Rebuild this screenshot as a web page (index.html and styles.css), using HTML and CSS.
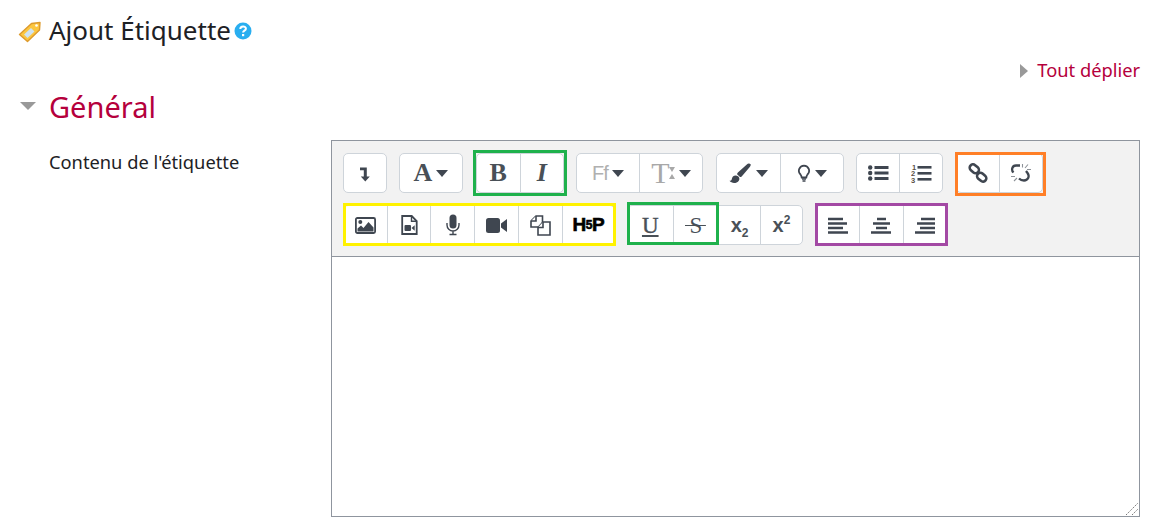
FILE: index.html
```html
<!DOCTYPE html>
<html>
<head>
    <title>Ajout Étiquette</title>
    <meta charset="utf-8">
    <link rel="stylesheet" href="styles.css">
</head>
<body>
    <svg class="defs" width="0" height="0">
        <symbol id="caret" viewBox="0 0 12 7"><path d="M0 0h12L6 7z"/></symbol>
    </svg>
    <div class="container">
        <div class="page-title">
            <svg class="label-icon" width="24" height="24" viewBox="0 0 24 24">
                <path d="M1.500 15.500 13.500 4.500 22 3.500 21.500 11 9.500 22.500z" fill="#fcc63f" stroke="#dd9a2c" stroke-width="1.400" stroke-linejoin="round"/>
                <path d="M6 15.500 13 9l3.500 3.500-7 6.500z" fill="#cfe3f2"/>
                <circle cx="18.500" cy="6.500" r="1.300" fill="#fff"/>
            </svg>
            <h2>Ajout Étiquette</h2>
            <svg class="help-icon" width="18" height="18" viewBox="0 0 18 18">
                <circle cx="9" cy="9" r="8.500" fill="#29aef0"/>
                <path d="M6.300 7c0-3.300 5.600-3.400 5.600-.3 0 2.100-2.800 1.900-2.800 3.900" fill="none" stroke="#fff" stroke-width="2"/>
                <rect x="8" y="12" width="2.200" height="2.200" fill="#fff"/>
            </svg>
        </div>
        <div class="collapse-row">
            <span class="tri-right"></span><a class="expand-link">Tout déplier</a>
        </div>
        <div class="section-head">
            <span class="tri-down"></span>
            <h3>Général</h3>
        </div>
        <div class="form-row">
            <label class="form-label">Contenu de l'étiquette</label>
            <div class="editor">
                <div class="toolbar">
                    <div class="tool-row first">
                        <div class="group w44">
                            <button class="btn"><svg width="14" height="17" viewBox="0 0 14 17"><path d="M2 2.500h6.800V11.500h3L7.300 16.500 2.800 11.500h3V5.300H2z" fill="#3f4650"/></svg></button>
                        </div>
                        <div class="group w64">
                            <button class="btn wide"><span class="serif big">A</span><svg class="car" width="12" height="7"><use href="#caret"/></svg></button>
                        </div>
                        <div class="group w88 hl-green">
                            <button class="btn"><span class="serif big">B</span></button>
                            <button class="btn"><span class="serif big ital">I</span></button>
                        </div>
                        <div class="group w127">
                            <button class="btn half"><span class="sans-ff">Ff</span><svg class="car" width="12" height="7"><use href="#caret"/></svg></button>
                            <button class="btn half"><span class="serif t-size">T</span><span class="updown"></span><svg class="car" width="12" height="7"><use href="#caret"/></svg></button>
                        </div>
                        <div class="group w128">
                            <button class="btn half">
                                <svg width="24" height="21" viewBox="0 0 22 20"><path d="M20.500 1c-1-.8-2-.4-3 .4L9 9c-.6.600-.8 1.200-.8 1.800l2.800 2.600c.8 0 1.300-.3 1.800-.9l7.500-8.700c.7-.9 1.200-2 .7-2.800zM7 12c-2.500 0-3.500 1.500-3.800 3.300C3 16.700 2 17 1 17c1.500 2 4.500 2.500 6.800 1.500 2-.8 3-2.600 2.500-4.300C10 13 8.500 12 7 12z" fill="#3f4650"/></svg>
                                <svg class="car" width="12" height="7"><use href="#caret"/></svg>
                            </button>
                            <button class="btn half">
                                <svg width="14" height="19" viewBox="0 0 14 18"><path d="M7 1.200a5.100 5.100 0 0 0-3.500 8.800c.8.900 1 1.800 1.200 3h4.600c.2-1.200.4-2.100 1.200-3A5.100 5.100 0 0 0 7 1.200z" fill="none" stroke="#3f4650" stroke-width="1.800"/><path d="M5 14.500h4M5.500 16.500h3" stroke="#3f4650" stroke-width="1.600"/></svg>
                                <svg class="car" width="12" height="7"><use href="#caret"/></svg>
                            </button>
                        </div>
                        <div class="group w87">
                            <button class="btn">
                                <svg width="21" height="16" viewBox="0 0 21 16"><g fill="#3f4650"><circle cx="2.200" cy="2.500" r="2.200"/><circle cx="2.200" cy="8" r="2.200"/><circle cx="2.200" cy="13.500" r="2.200"/><rect x="6.500" y="1" width="14" height="3"/><rect x="6.500" y="6.500" width="14" height="3"/><rect x="6.500" y="12" width="14" height="3"/></g></svg>
                            </button>
                            <button class="btn">
                                <svg width="21" height="21" viewBox="0 0 21 21"><g fill="#3f4650"><rect x="6.500" y="3" width="14" height="2.600"/><rect x="6.500" y="9" width="14" height="2.600"/><rect x="6.500" y="15" width="14" height="2.600"/></g><g font-family="Liberation Sans" font-size="7.500" font-weight="700" fill="#5a5046"><text x="1" y="6.500">1</text><text x="0" y="13">2</text><text x="0" y="19.500">3</text></g></svg>
                            </button>
                        </div>
                        <div class="group w87 hl-orange">
                            <button class="btn">
                                <svg width="20" height="20" viewBox="0 0 20 20"><g fill="none" stroke="#3f4650" stroke-width="2.600"><rect x="1.300" y="2.500" width="10" height="6.600" rx="3.300" transform="rotate(40 6.300 5.800)"/><rect x="8.700" y="10.900" width="10" height="6.600" rx="3.300" transform="rotate(40 13.700 14.200)"/></g></svg>
                            </button>
                            <button class="btn">
                                <svg width="22" height="20" viewBox="0 0 22 20"><g fill="none" stroke="#3f4650" stroke-width="2.300"><path d="M10 2.500H6C2 2.500 1 7 3.500 9.500"/><path d="M16 8l1.500 2c2.500 3.500.5 7.500-3.500 7.500-2.500 0-4-1-5-2"/></g><g stroke="#8d9298" stroke-width="1.100"><path d="M12.500 1v3.500M18 1.500 15 5M21 6.500h-4M1 13.500h4M4 18 7 15"/></g></svg>
                            </button>
                        </div>
                    </div>
                    <div class="tool-row second">
                        <div class="group w272 hl-yellow">
                            <button class="btn">
                                <svg width="21" height="17" viewBox="0 0 21 17"><rect x=".9" y="1" width="19.200" height="15" rx="1.500" fill="none" stroke="#3f4650" stroke-width="1.800"/><circle cx="5.300" cy="5" r="2" fill="#3f4650"/><path d="M2.500 14.500v-3L6 8.500l2.500 2.500L13.500 5l5 5.500v4z" fill="#3f4650"/></svg>
                            </button>
                            <button class="btn">
                                <svg width="17" height="20" viewBox="0 0 17 20"><path d="M1.200 1h9.500l5 5v13H1.200z" fill="none" stroke="#3f4650" stroke-width="1.800"/><path d="M10.500 1v5.200h5.200" fill="none" stroke="#3f4650" stroke-width="1.400"/><rect x="3.500" y="10" width="6.500" height="6" rx="1" fill="#3f4650"/><path d="M10.500 13l3.200-2.800v5.600z" fill="#3f4650"/></svg>
                            </button>
                            <button class="btn">
                                <svg width="14" height="22" viewBox="0 0 14 21"><rect x="3.500" y="0" width="7" height="14" rx="3.500" fill="#3f4650"/><path d="M1 8.500v2a6 6 0 0 0 12 0v-2M7 16.500V20M3.500 20h7" fill="none" stroke="#3f4650" stroke-width="1.400"/></svg>
                            </button>
                            <button class="btn">
                                <svg width="21" height="15" viewBox="0 0 21 15"><rect x="0" y="0" width="14" height="15" rx="2.500" fill="#3f4650"/><path d="M15 5.500 21 1v13l-6-4.500z" fill="#3f4650"/></svg>
                            </button>
                            <button class="btn">
                                <svg width="21" height="21" viewBox="0 0 21 21"><g fill="#fff" stroke="#3f4650" stroke-width="1.600"><path d="M1 6 6 1h6.500v11H1z"/><path d="M1 6h5V1"/><path d="M8 12.500l5-5.500h7v13H8z"/><path d="M8 12.500h5V7"/></g></svg>
                            </button>
                            <button class="btn grow"><span class="h5p">H<small>5</small>P</span></button>
                        </div>
                        <div class="group w176">
                            <button class="btn"><span class="serif mid under">U</span></button>
                            <button class="btn"><span class="serif mid strike">S</span></button>
                            <button class="btn narrow"><span class="script">x<sub>2</sub></span></button>
                            <button class="btn narrow"><span class="script">x<sup>2</sup></span></button>
                            <span class="hl-green-part"></span>
                        </div>
                        <div class="group w133 hl-purple">
                            <button class="btn">
                                <svg width="21" height="17" viewBox="0 0 21 17"><path d="M1 2h15M1 6.500h19M1 11h15M1 15.500h20" stroke="#3f4650" stroke-width="2.400"/></svg>
                            </button>
                            <button class="btn">
                                <svg width="21" height="17" viewBox="0 0 21 17"><path d="M6 2h9M2 6.500h17M5 11h11M0 15.500h20" stroke="#3f4650" stroke-width="2.400"/></svg>
                            </button>
                            <button class="btn">
                                <svg width="21" height="17" viewBox="0 0 21 17"><path d="M6 2h14M2 6.500h18M5 11h15M0 15.500h20" stroke="#3f4650" stroke-width="2.400"/></svg>
                            </button>
                        </div>
                    </div>
                </div>
                <div class="content">
                    <svg class="resizer" width="14" height="14" viewBox="0 0 14 14"><path d="M1 13 13 1M7 13l6-6" stroke="#777" stroke-width="1" stroke-dasharray="1.500 1"/></svg>
                </div>
            </div>
        </div>
    </div>
</body>
</html>
```

FILE: styles.css
```css
body { margin:0; font-family:"Noto Sans","Liberation Sans",sans-serif; color:#1d2125; background:#fff; overflow:hidden; }
.defs { position:absolute; }
.container { padding:0 13px 0 18px; }

.page-title { display:flex; align-items:center; height:60px; }
.label-icon { margin-right:7px; margin-top:2px; }
.page-title h2 { margin:0; font-size:26px; font-weight:400; line-height:60px; }
.help-icon { margin-left:3px; margin-top:2px; }

.collapse-row { display:flex; justify-content:flex-end; align-items:center; height:22px; }
.tri-right { width:0; height:0; border-left:8px solid #999; border-top:7px solid transparent; border-bottom:7px solid transparent; margin-right:9px; }
.expand-link { color:#b5003c; font-size:18.300px; line-height:22px; margin-top:-3px; }

.section-head { display:flex; align-items:center; height:50px; margin-top:-1px; }
.tri-down { width:0; height:0; border-top:8px solid #999; border-left:8px solid transparent; border-right:8px solid transparent; margin:0 13px 0 2px; }
.section-head h3 { margin:0; font-size:29px; font-weight:400; color:#b5003c; }

.form-row { display:flex; margin-top:9px; }
.form-label { width:313px; padding:8px 0 0 31px; box-sizing:border-box; font-size:18.300px; line-height:28px; }
.editor { width:809px; height:377px; box-sizing:border-box; border:1px solid #8f959e; display:flex; flex-direction:column; }

.toolbar { height:116px; box-sizing:border-box; background:#f2f2f2; border-bottom:1px solid #8f959e; padding:12px 11px 0; }
.tool-row { display:flex; gap:12px; height:40px; }
.tool-row.first .group:nth-child(2n+3) { margin-left:1px; }
.tool-row.second { margin-top:12px; }

.group { position:relative; display:flex; box-sizing:border-box; height:40px; background:#fff; border:1px solid #ced4da; border-radius:5px; }
.w44 { width:44px; }
.w64 { width:64px; }
.w88 { width:88px; }
.w127 { width:127px; }
.w128 { width:128px; }
.w87 { width:87px; }
.w272 { width:272px; }
.w176 { width:176px; }
.w133 { width:133px; }

.btn { flex:1; min-width:0; display:flex; align-items:center; justify-content:center; gap:4px; padding:0; background:none; border:0; border-left:1px solid #ced4da; color:#3f4650; font-size:16px; }
.btn:first-child { border-left:0; }
.btn.grow { flex:1.200; }
.btn.narrow { flex:.92; }

.hl-green::after, .hl-green-part,
.hl-orange::after, .hl-yellow::after, .hl-purple::after { content:""; position:absolute; pointer-events:none; border-style:solid; border-width:3px; }
.hl-green::after { inset:-4px; border-color:#1fb14c; }
.hl-orange::after { inset:-2px -4px -4px -2px; border-color:#ff7f27; }
.hl-yellow::after { inset:-3px -2px -2px -1px; border-color:#fff200; }
.hl-purple::after { inset:-3px -1px -2px -1px; border-color:#a349a4; }
.hl-green-part { left:-1px; top:-4px; bottom:-1px; width:86px; border-color:#1fb14c; }

.serif { font-family:"Liberation Serif",serif; font-weight:700; }
.big { font-size:26px; color:#495057; line-height:1; }
.ital { font-style:italic; }
.mid { font-size:23px; color:#495057; line-height:1; }
.under { text-decoration:underline; text-decoration-thickness:2px; text-underline-offset:2px; font-weight:400; -webkit-text-stroke:.4px #495057; }
.strike { padding:0 4px; font-weight:400; background:linear-gradient(#495057,#495057) center/100% 1px no-repeat; }
.sans-ff { font-family:"Liberation Sans",sans-serif; font-size:20px; color:#b0b0b0; letter-spacing:-1px; }
.t-size { font-size:30px; font-weight:400; color:#a8a8a8; line-height:1; }
.updown { width:0; height:12px; border-left:3px solid transparent; border-right:3px solid transparent; border-bottom:5px solid #a8a8a8; border-top:5px solid #a8a8a8; box-sizing:border-box; margin-left:-5px; }
.car { fill:#3f4650; }
.script { font-family:"Liberation Sans",sans-serif; font-weight:700; font-size:20px; color:#495057; }
.script sub, .script sup { font-size:12px; line-height:0; }
.h5p { font-family:"Liberation Sans",sans-serif; font-weight:700; font-size:19px; letter-spacing:-.5px; color:#000; -webkit-text-stroke:.6px #000; }
.h5p small { font-size:12px; vertical-align:2px; }

.content { position:relative; flex:1; background:#fff; }
.resizer { position:absolute; right:0; bottom:0; }
```
